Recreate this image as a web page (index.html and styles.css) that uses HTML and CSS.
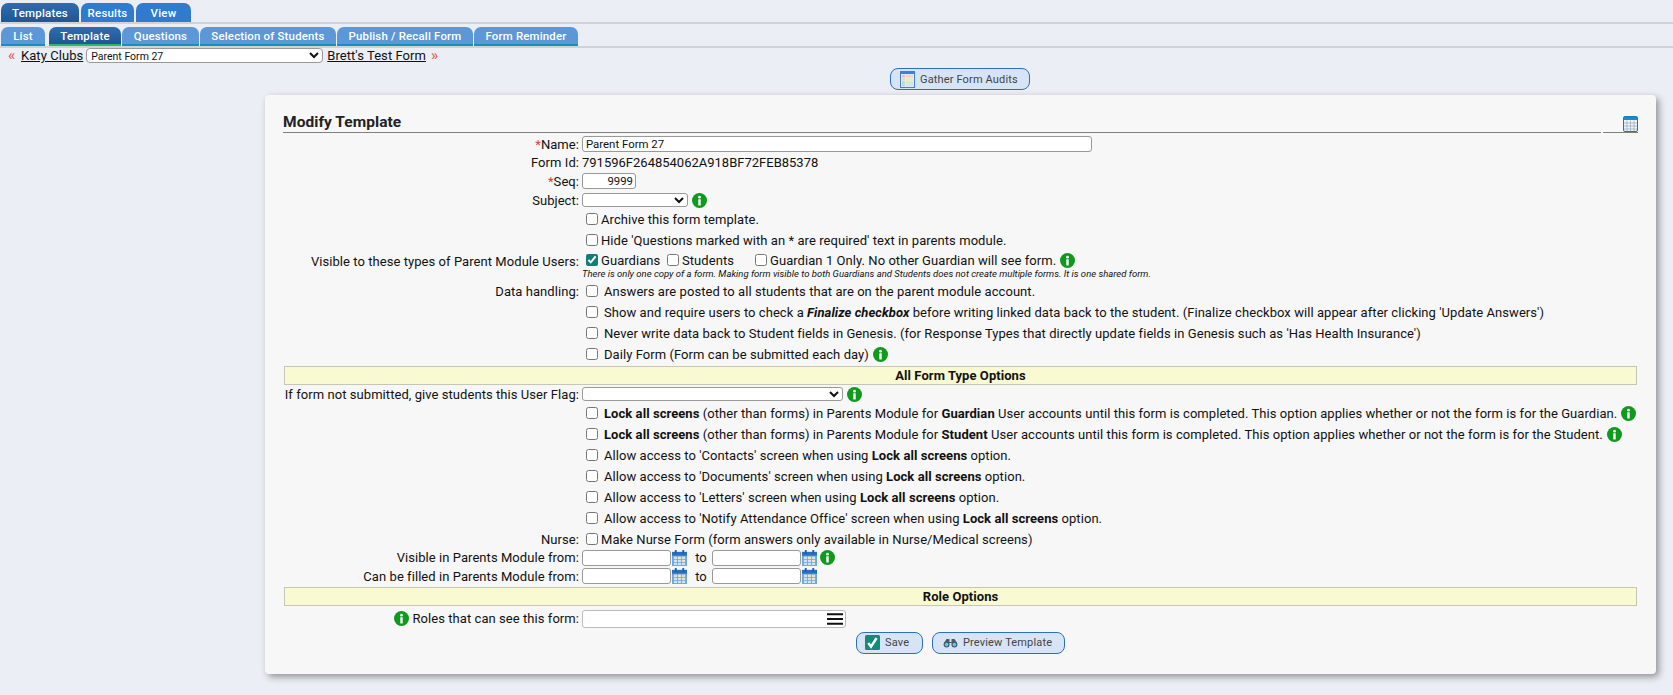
FILE: index.html
```html
<!DOCTYPE html>
<html lang="en">
<head>
<meta charset="utf-8">
<title>Modify Template</title>
<link rel="stylesheet" href="styles.css">
</head>
<body>
<svg class="defs" width="0" height="0" aria-hidden="true">
  <symbol id="info" viewBox="0 0 16 16">
    <circle cx="8" cy="8" r="8" fill="#0f9a1e"/>
    <circle cx="8" cy="4.4" r="1.5" fill="#fff"/>
    <rect x="6.7" y="6.6" width="2.6" height="6.6" rx=".4" fill="#fff"/>
  </symbol>
  <symbol id="cal" viewBox="0 0 16 17">
    <rect x="0" y="2" width="16" height="15" fill="#6ba6e0"/>
    <rect x="0" y="2" width="16" height="4" fill="#2a6fc0"/>
    <rect x="3" y="0" width="2" height="4" fill="#1d5fae"/>
    <rect x="11" y="0" width="2" height="4" fill="#1d5fae"/>
    <rect x="2" y="7" width="3.4" height="2.6" fill="#cfe3f5"/>
    <rect x="6.3" y="7" width="3.4" height="2.6" fill="#f2e7b0"/>
    <rect x="10.6" y="7" width="3.4" height="2.6" fill="#cfe3f5"/>
    <rect x="2" y="10.4" width="3.4" height="2.6" fill="#cfe3f5"/>
    <rect x="6.3" y="10.4" width="3.4" height="2.6" fill="#cfe3f5"/>
    <rect x="10.6" y="10.4" width="3.4" height="2.6" fill="#f2e7b0"/>
    <rect x="2" y="13.8" width="3.4" height="2.2" fill="#cfe3f5"/>
    <rect x="6.3" y="13.8" width="3.4" height="2.2" fill="#cfe3f5"/>
    <rect x="10.6" y="13.8" width="3.4" height="2.2" fill="#cfe3f5"/>
  </symbol>
</svg>

<nav class="tabs tabs-top">
  <a class="tab tab-main is-active">Templates</a>
  <a class="tab tab-main tab-results">Results</a>
  <a class="tab tab-main tab-view">View</a>
</nav>
<nav class="tabs tabs-sub">
  <a class="tab tab-sub t-list">List</a>
  <a class="tab tab-sub t-template is-active">Template</a>
  <a class="tab tab-sub t-questions">Questions</a>
  <a class="tab tab-sub t-selection">Selection of Students</a>
  <a class="tab tab-sub t-publish">Publish / Recall Form</a>
  <a class="tab tab-sub t-reminder">Form Reminder</a>
</nav>

<div class="crumbs">
  <span class="chev">«</span>
  <a class="crumb">Katy Clubs</a>
  <select class="crumb-select"><option>Parent Form 27</option></select>
  <a class="crumb">Brett's Test Form</a>
  <span class="chev">»</span>
</div>

<div class="actions">
  <button class="btn btn-audit" type="button">
    <svg class="btn-icon" width="15" height="17" viewBox="0 0 15 17">
      <rect x="0" y="0" width="15" height="17" fill="#3f7fd8"/>
      <rect x="1" y="3" width="13" height="13" fill="#e4ebf3"/>
      <rect x="2" y="4" width="3" height="2.4" fill="#ecc0b8"/><rect x="6" y="4" width="7" height="2.4" fill="#f0d2cc"/>
      <rect x="2" y="7.2" width="3" height="2.4" fill="#ecdca8"/><rect x="6" y="7.2" width="7" height="2.4" fill="#f1e6c2"/>
      <rect x="2" y="10.4" width="3" height="2.4" fill="#b2e0b4"/><rect x="6" y="10.4" width="7" height="2.4" fill="#cbeccd"/>
      <rect x="2" y="13.4" width="3" height="1.8" fill="#bfcfe8"/><rect x="6" y="13.4" width="7" height="1.8" fill="#d5e0f0"/>
    </svg>
    Gather Form Audits
  </button>
</div>

<main class="page">
  <section class="card">
    <header class="card-head">
      <h1 class="card-title">Modify Template</h1>
      <div class="head-line"><span class="seg seg-main"></span><span class="seg seg-end"></span></div>
      <span class="head-icon">
        <svg width="15" height="16" viewBox="0 0 15 16">
          <rect x=".5" y=".5" width="14" height="15" rx="1.5" fill="#eef4fa" stroke="#0f7cc4"/>
          <rect x="1" y="1" width="13" height="3" fill="#1a8ad4"/>
          <path d="M1 7h13M1 10h13M1 13h13M4 4.5v10.5M7.5 4.5v10.5M11 4.5v10.5" stroke="#9aa7b4" stroke-width=".7"/>
        </svg>
      </span>
    </header>

    <div class="row">
      <label class="lab"><span class="req">*</span>Name:</label>
      <div class="val"><input class="field f-name" type="text" value="Parent Form 27"></div>
    </div>
    <div class="row">
      <label class="lab">Form Id:</label>
      <div class="val val-plain">791596F264854062A918BF72FEB85378</div>
    </div>
    <div class="row">
      <label class="lab"><span class="req">*</span>Seq:</label>
      <div class="val"><input class="field f-seq" type="text" value="9999"></div>
    </div>
    <div class="row">
      <label class="lab">Subject:</label>
      <div class="val">
        <select class="field f-subject"><option></option></select>
        <svg class="info"><use href="#info"/></svg>
      </div>
    </div>
    <div class="row row-check">
      <span class="lab"></span>
      <div class="val"><input class="cb" type="checkbox"><span class="tx">Archive this form template.</span></div>
    </div>
    <div class="row row-check">
      <span class="lab"></span>
      <div class="val"><input class="cb" type="checkbox"><span class="tx">Hide 'Questions marked with an * are required' text in parents module.</span></div>
    </div>
    <div class="row row-vis">
      <span class="lab">Visible to these types of Parent Module Users:</span>
      <div class="val val-stack">
        <div class="vis-line">
          <input class="cb" type="checkbox" checked><span class="tx w-guard">Guardians</span>
          <input class="cb cb-flush" type="checkbox"><span class="tx w-stud">Students</span>
          <input class="cb cb-flush" type="checkbox"><span class="tx">Guardian 1 Only. No other Guardian will see form.</span>
          <svg class="info"><use href="#info"/></svg>
        </div>
        <div class="note">There is only one copy of a form. Making form visible to both Guardians and Students does not create multiple forms. It is one shared form.</div>
      </div>
    </div>
    <div class="row row-check">
      <span class="lab">Data handling:</span>
      <div class="val"><input class="cb" type="checkbox"><span class="tx tx-wide">Answers are posted to all students that are on the parent module account.</span></div>
    </div>
    <div class="row row-check">
      <span class="lab"></span>
      <div class="val"><input class="cb" type="checkbox"><span class="tx tx-wide">Show and require users to check a <b><i>Finalize checkbox</i></b> before writing linked data back to the student. (Finalize checkbox will appear after clicking 'Update Answers')</span></div>
    </div>
    <div class="row row-check">
      <span class="lab"></span>
      <div class="val"><input class="cb" type="checkbox"><span class="tx tx-wide">Never write data back to Student fields in Genesis. (for Response Types that directly update fields in Genesis such as 'Has Health Insurance')</span></div>
    </div>
    <div class="row row-check">
      <span class="lab"></span>
      <div class="val"><input class="cb" type="checkbox"><span class="tx tx-wide">Daily Form (Form can be submitted each day)</span><svg class="info"><use href="#info"/></svg></div>
    </div>

    <div class="band band-a">All Form Type Options</div>

    <div class="row row-flag">
      <span class="lab">If form not submitted, give students this User Flag:</span>
      <div class="val">
        <select class="field f-flag"><option></option></select>
        <svg class="info"><use href="#info"/></svg>
      </div>
    </div>
    <div class="row row-check">
      <span class="lab"></span>
      <div class="val"><input class="cb" type="checkbox"><span class="tx tx-wide"><b>Lock all screens</b> (other than forms) in Parents Module for <b>Guardian</b> User accounts until this form is completed. This option applies whether or not the form is for the Guardian.</span><svg class="info"><use href="#info"/></svg></div>
    </div>
    <div class="row row-check">
      <span class="lab"></span>
      <div class="val"><input class="cb" type="checkbox"><span class="tx tx-wide"><b>Lock all screens</b> (other than forms) in Parents Module for <b>Student</b> User accounts until this form is completed. This option applies whether or not the form is for the Student.</span><svg class="info"><use href="#info"/></svg></div>
    </div>
    <div class="row row-check">
      <span class="lab"></span>
      <div class="val"><input class="cb" type="checkbox"><span class="tx tx-wide">Allow access to 'Contacts' screen when using <b>Lock all screens</b> option.</span></div>
    </div>
    <div class="row row-check">
      <span class="lab"></span>
      <div class="val"><input class="cb" type="checkbox"><span class="tx tx-wide">Allow access to 'Documents' screen when using <b>Lock all screens</b> option.</span></div>
    </div>
    <div class="row row-check">
      <span class="lab"></span>
      <div class="val"><input class="cb" type="checkbox"><span class="tx tx-wide">Allow access to 'Letters' screen when using <b>Lock all screens</b> option.</span></div>
    </div>
    <div class="row row-check">
      <span class="lab"></span>
      <div class="val"><input class="cb" type="checkbox"><span class="tx tx-wide">Allow access to 'Notify Attendance Office' screen when using <b>Lock all screens</b> option.</span></div>
    </div>
    <div class="row row-check">
      <span class="lab">Nurse:</span>
      <div class="val"><input class="cb" type="checkbox"><span class="tx">Make Nurse Form (form answers only available in Nurse/Medical screens)</span></div>
    </div>
    <div class="row row-date r-date-first">
      <span class="lab">Visible in Parents Module from:</span>
      <div class="val">
        <input class="field f-date" type="text"><svg class="cal"><use href="#cal"/></svg>
        <span class="to">to</span>
        <input class="field f-date" type="text"><svg class="cal"><use href="#cal"/></svg>
        <svg class="info info-date"><use href="#info"/></svg>
      </div>
    </div>
    <div class="row row-date">
      <span class="lab">Can be filled in Parents Module from:</span>
      <div class="val">
        <input class="field f-date" type="text"><svg class="cal"><use href="#cal"/></svg>
        <span class="to">to</span>
        <input class="field f-date" type="text"><svg class="cal"><use href="#cal"/></svg>
      </div>
    </div>

    <div class="band band-b">Role Options</div>

    <div class="row row-roles">
      <span class="lab"><svg class="info info-left"><use href="#info"/></svg>Roles that can see this form:</span>
      <div class="val">
        <div class="roles-box">
          <svg width="16" height="12" viewBox="0 0 16 12"><path d="M0 1.2h16M0 6h16M0 10.8h16" stroke="#111" stroke-width="2"/></svg>
        </div>
      </div>
    </div>

    <div class="buttons">
      <button class="btn btn-save" type="button">
        <svg class="btn-icon" width="15" height="15" viewBox="0 0 15 15">
          <rect width="15" height="15" rx="1.5" fill="#128a7c"/>
          <path d="M3.2 8l2.8 3.6L11.6 3" fill="none" stroke="#fff" stroke-width="2.4"/>
        </svg>
        Save
      </button>
      <button class="btn btn-preview" type="button">
        <svg class="btn-icon" width="15" height="10" viewBox="0 0 15 10">
          <path d="M1 5L3.5 1h3v3h2V1h3L14 5z" fill="#4a5a68"/>
          <circle cx="3.6" cy="6.5" r="3" fill="#4a5a68"/>
          <circle cx="11.4" cy="6.5" r="3" fill="#4a5a68"/>
          <circle cx="3.6" cy="6.6" r="1.8" fill="#5cc8ee"/>
          <circle cx="11.4" cy="6.6" r="1.8" fill="#5cc8ee"/>
        </svg>
        Preview Template
      </button>
    </div>
  </section>
</main>
</body>
</html>
```
FILE: styles.css
```css
* { box-sizing: border-box; }
html, body { margin: 0; padding: 0; }
body {
  background: #ebeef4;
  color: #111;
  font-family: Roboto, "Liberation Sans", sans-serif;
  font-size: 13px;
  letter-spacing: .06px;
  height: 695px;
  overflow: hidden;
}
.defs { position: absolute; }

.tabs { display: flex; border-bottom: 2px solid #cfd2d6; padding-left: 1px; }
.tabs-top { gap: 2px; height: 24px; padding-top: 3px; }
.tabs-sub { gap: 1px; height: 24px; padding-top: 3px; }

.tab {
  display: flex;
  align-items: center;
  justify-content: center;
  color: #fff;
  letter-spacing: .2px;
  border-radius: 7px 7px 0 0;
  font-weight: 500;
}
.tab-main { background: #2f7bd0; font-size: 11.5px; width: 78px; height: 19px; }
.tab-main.is-active { background: linear-gradient(#2f6cb0, #1f5795); }
.tab-results { width: 53px; }
.tab-view { width: 55px; }

.tab-sub {
  background: #5c97d8;
  font-size: 11.4px;
  height: 19px;
  border-bottom: 2px solid #1790c0;
}
.tab-sub.is-active { background: linear-gradient(#2f6cb0, #1f5795); border-bottom-color: #2bb673; }
.t-list { width: 44px; margin-right: 3px; }
.t-template { width: 72px; }
.t-questions { width: 77px; }
.t-selection { width: 136px; }
.t-publish { width: 136px; }
.t-reminder { width: 104px; }

.crumbs {
  display: flex;
  align-items: center;
  height: 15px;
  padding-left: 8px;
  font-size: 13px;
}
.chev { color: #e0625f; font-size: 15px; font-weight: 500; letter-spacing: 0; width: 13px; line-height: 15px; }
.crumbs .chev:last-child { margin-left: 5px; }
.crumb { color: #111; text-decoration: underline; }
.crumb-select {
  width: 237px;
  height: 15px;
  margin: 0 4px 0 3px;
  padding: 0;
  font: 10.5px Roboto, sans-serif;
  color: #111;
  background: #fff;
  border: 1px solid #999;
  border-radius: 4px;
}

.actions { display: flex; justify-content: center; margin-top: 5px; padding-left: 247px; height: 22px; }

.btn {
  display: inline-flex;
  align-items: center;
  gap: 5px;
  height: 22px;
  padding: 0 8px;
  font: 11px Roboto, sans-serif;
  color: #444;
  background: #d6e4f5;
  border: 1px solid #2b6fc4;
  border-radius: 8px;
  letter-spacing: .15px;
}
.btn-audit { width: 140px; padding-left: 9px; }
.btn-save { width: 67px; }
.btn-preview { width: 133px; padding-left: 10px; }
.btn-icon { flex: none; }

.page { padding: 5px 17px 0 265px; }
.card {
  width: 1391px;
  height: 579px;
  padding: 12px 18px 0;
  background: #f7f7f7;
  border-radius: 4px;
  box-shadow: 3px 3px 7px rgba(0, 0, 0, .38);
}
.card-head { position: relative; height: 26px; margin-bottom: 2px; }
.card-title {
  margin: 0;
  padding-top: 6px;
  font-size: 15.5px;
  font-weight: 700;
  line-height: 18px;
  color: #222;
}
.head-line {
  position: absolute;
  left: 0;
  right: 0;
  bottom: 0;
  display: flex;
  gap: 2px;
}
.seg { height: 1px; background: #808080; }
.seg-main { flex: 1; }
.seg-end { width: 35px; }
.head-icon { position: absolute; right: 0; top: 9px; line-height: 0; }

.row { display: flex; align-items: center; height: 18.6px; }
.lab { flex: none; width: 296px; margin-right: 3px; text-align: right; white-space: nowrap; }
.val { display: flex; align-items: center; white-space: nowrap; }
.val-plain { letter-spacing: 0; }
.req { color: #e33; }

.field {
  height: 16px;
  margin: 0;
  padding: 0 2px 0 3px;
  font: 11.4px Roboto, sans-serif;
  color: #111;
  background: #fff;
  border: 1px solid #999;
  border-radius: 3px;
  outline: 0;
}
.f-name { width: 510px; }
.f-seq { width: 54px; text-align: right; }
.f-subject { width: 106px; height: 14px; padding: 0; }
.f-flag { width: 261px; height: 14px; padding: 0; }
.f-date { width: 89px; }

.info { width: 15px; height: 15px; margin-left: 4px; flex: none; }
.info-left { margin: 0 3px 0 0; vertical-align: -3px; }
.info-date { margin-left: 3px; }
.cal { width: 15px; height: 16px; margin-left: 1px; flex: none; }
.to { width: 25px; text-align: center; padding-left: 3px; }

.cb {
  width: 12px;
  height: 12px;
  margin: 0 3px 2px 4px;
  flex: none;
  accent-color: #0f7f78;
}
.cb-flush { margin-left: 0; }
.tx { display: inline-block; }
.tx-wide { margin-left: 3px; }
.w-guard { width: 66px; }
.w-stud { width: 73px; }

.row-check { height: 21px; }
.row-vis { height: 30px; align-items: flex-start; }
.row-vis .lab { padding-top: 3px; }
.val-stack { display: block; }
.vis-line { display: flex; align-items: center; height: 17px; margin-top: 1px; }
.note {
  font-size: 9.5px;
  font-style: italic;
  line-height: 10px;
  letter-spacing: 0;
}

.band {
  display: flex;
  align-items: center;
  justify-content: center;
  height: 19px;
  margin-left: 1px;
  margin-right: 1px;
  background: #f9f9d2;
  border: 1px solid #c6c6b4;
  font-size: 13px;
  font-weight: 700;
}
.band-a { margin-top: 1px; }
.band-b { margin-top: 1px; }
.row-flag { height: 18px; }
.r-date-first { margin-top: -2px; }
.row-roles { height: 22px; margin-top: 2px; }
.roles-box {
  display: flex;
  align-items: center;
  justify-content: flex-end;
  width: 264px;
  height: 18px;
  padding-right: 2px;
  background: #fff;
  border: 1px solid #bbb;
  border-radius: 3px;
}
.buttons { display: flex; justify-content: center; gap: 9px; margin-top: 2px; }
```
